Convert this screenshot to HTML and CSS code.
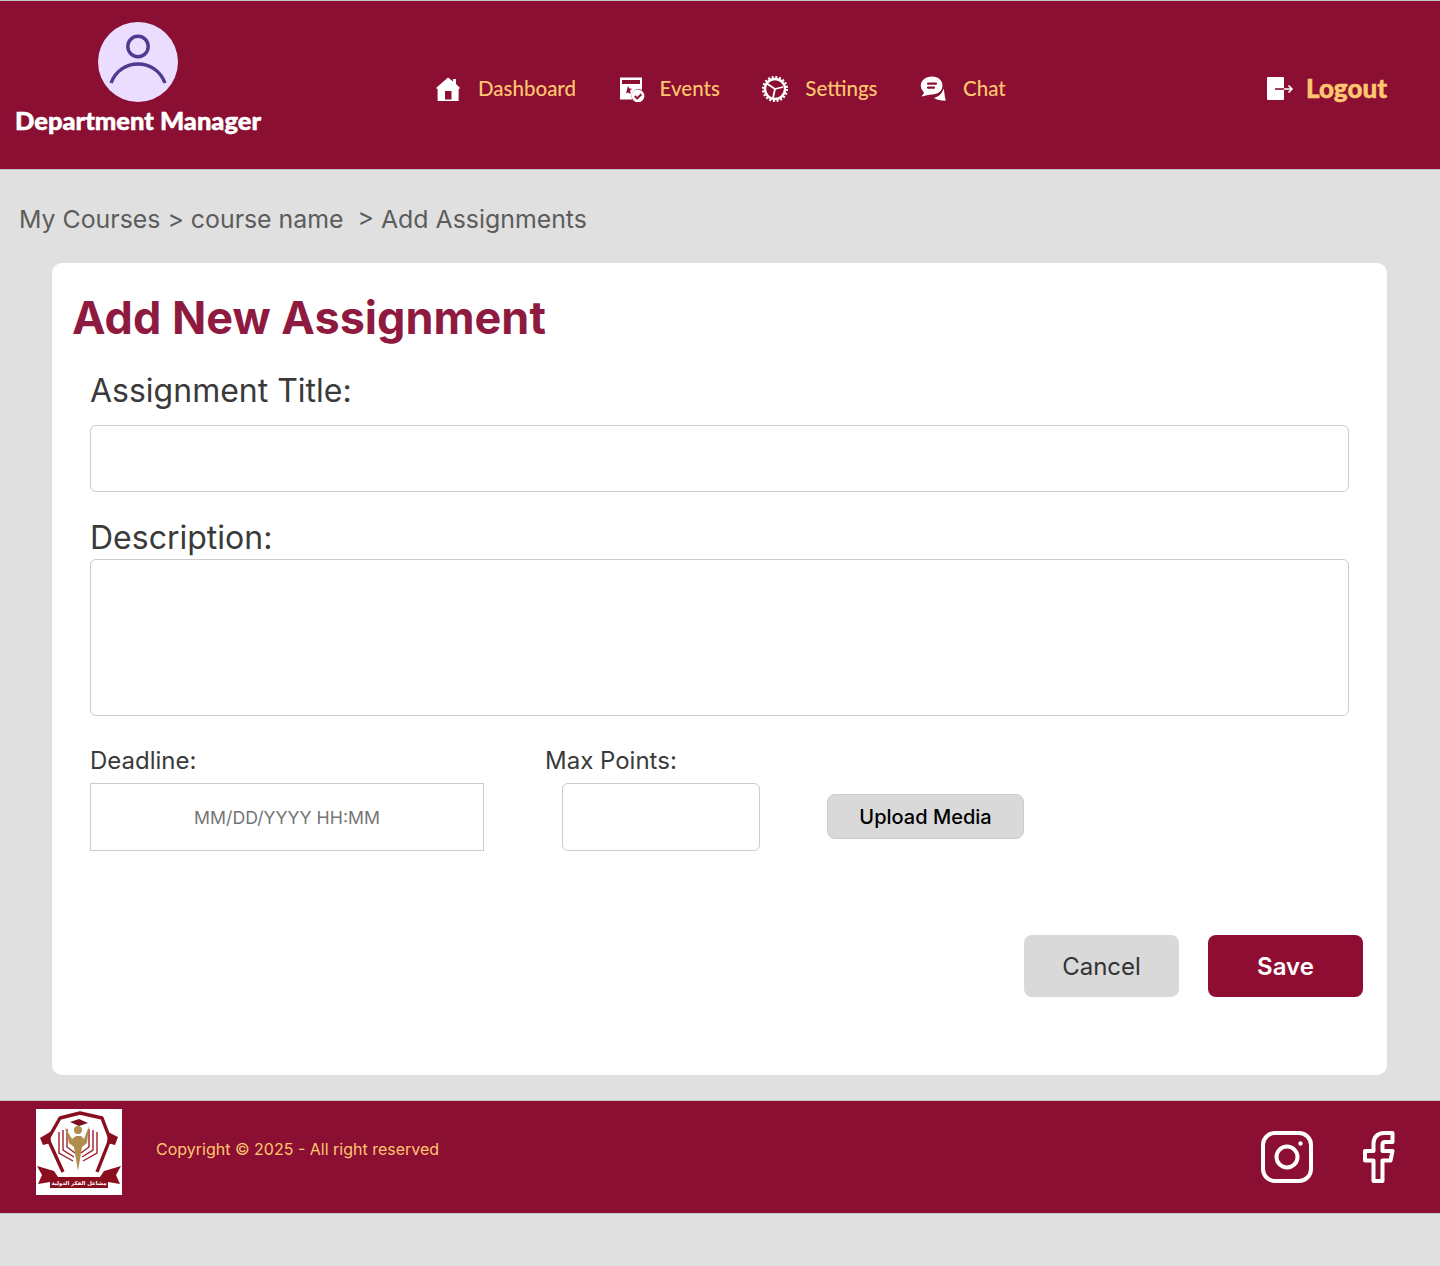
FILE: index.html
```html
<!DOCTYPE html>
<html lang="en">
<head>
  <meta charset="UTF-8">
  <meta name="viewport" content="width=device-width, initial-scale=1.0">
  <title>Add New Assignment</title>
  <link rel="stylesheet" href="styles.css">
</head>
<body>
  <header class="top-bar">
    <div class="brand">
      <div class="avatar">
        <svg width="80" height="80" viewBox="0 0 80 80" fill="none" stroke="#4f3a8f" stroke-width="3.4">
          <circle cx="40" cy="24.5" r="10.2"/>
          <path d="M13 61 C18 48 29 42 40 42 C51 42 62 48 67 61"/>
        </svg>
      </div>
      <div class="brand-name">Department Manager</div>
    </div>

    <nav class="main-nav">
      <a class="nav-item" href="#">
        <svg class="nav-icon" viewBox="0 0 26 26" fill="#fff">
          <path d="M13 1.5 L18 5.5 V3 H21 V8 L25 12 L23.6 13.2 V25 H2.6 V13.2 L1 12 Z"/>
          <rect x="10" y="15" width="6.5" height="8.5" fill="#8a0f32"/>
        </svg>
        <span>Dashboard</span>
      </a>
      <a class="nav-item events" href="#">
        <svg class="nav-icon" viewBox="0 0 26 26">
          <path d="M1 1.5 H23 V14 A7 7 0 0 0 13.5 23.5 H1 Z" fill="#fff"/>
          <rect x="3" y="4" width="18" height="4" fill="#8a0f32"/>
          <path d="M9 10 L10.4 12.6 L13 12.8 L11 14.8 L11.8 18 L9 16.4 L7 17.6 Z" fill="#8a0f32"/>
          <circle cx="19" cy="20" r="6.4" fill="#fff"/>
          <path d="M15.8 20 L18.2 22.4 L22.4 18.2" fill="none" stroke="#8a0f32" stroke-width="2"/>
        </svg>
        <span>Events</span>
      </a>
      <a class="nav-item" href="#">
        <svg class="nav-icon" viewBox="0 0 26 26" fill="none" stroke="#fff">
          <circle cx="13" cy="13" r="10" stroke-width="2.4"/>
          <circle cx="13" cy="13" r="12" stroke-width="2.2" stroke-dasharray="2 1.77"/>
          <path d="M13 13 L5.5 8 M13 13 L21 11 M13 13 L11 22" stroke-width="1.8"/>
        </svg>
        <span>Settings</span>
      </a>
      <a class="nav-item" href="#">
        <svg class="nav-icon" viewBox="0 0 26 26">
          <path d="M12 .5 C18.5 .5 22.5 4.6 22.5 9.6 C22.5 15 18 18.4 12 18.4 C9 18.4 5 20 1.4 20.4 C3 19 4 17.6 3.8 16 C1.8 14.4 .8 12 .8 9.6 C.8 4.6 5.5 .5 12 .5 Z" fill="#fff"/>
          <rect x="7" y="6.5" width="10" height="2.2" rx="1" fill="#8a0f32"/>
          <rect x="7" y="10.5" width="8" height="2.2" rx="1" fill="#8a0f32"/>
          <path d="M23.6 12.5 C24.6 16 24.4 20 25.8 24.6 C22 24.8 17 24 14 22 C18 21 22 18 23.6 12.5 Z" fill="#fff"/>
        </svg>
        <span>Chat</span>
      </a>
    </nav>

    <a class="logout" href="#">
      <svg width="29" height="25" viewBox="0 0 29 25">
        <rect x="1" y="1" width="17" height="23" rx="1" fill="#fff"/>
        <path d="M9 13 H18" stroke="#8a0f32" stroke-width="1.6"/>
        <path d="M18 13 H26 M22.5 9.5 L26 13 L22.5 16.5" fill="none" stroke="#fff" stroke-width="1.6"/>
      </svg>
      <span>Logout</span>
    </a>
  </header>

  <div class="breadcrumb">My Courses &gt; course name &nbsp;&gt; Add Assignments</div>

  <main class="card">
    <h1>Add New Assignment</h1>
    <form class="assignment-form">
      <label class="big-label" for="title">Assignment Title:</label>
      <input class="field title-field" type="text" id="title">

      <label class="big-label desc-label" for="description">Description:</label>
      <textarea class="field desc-field" id="description"></textarea>

      <div class="meta-row">
        <div class="deadline">
          <label for="deadline">Deadline:</label>
          <input class="field square" type="text" id="deadline" placeholder="MM/DD/YYYY HH:MM">
        </div>
        <div class="points">
          <label for="points">Max Points:</label>
          <input class="field" type="text" id="points">
        </div>
        <button class="upload-btn" type="button">Upload Media</button>
      </div>

      <div class="form-actions">
        <button class="btn btn-cancel" type="button">Cancel</button>
        <button class="btn btn-save" type="submit">Save</button>
      </div>
    </form>
  </main>

  <footer class="bottom-bar">
    <div class="school-logo">
      <svg width="86" height="86" viewBox="0 0 86 86">
        <rect width="86" height="86" fill="#fff"/>
        <path d="M27 63 L12 30 L24 9 L44 4 L66 9 L74 30 L61 63" fill="none" stroke="#8a0f1e" stroke-width="3.4" stroke-linejoin="round"/>
        <path d="M14 23 L4 29 L7 36 L15 34 Z M72 23 L82 28 L79 36 L71 34 Z" fill="#8a0f1e"/>
        <path d="M23 23 V44 L37 52 M27 21 V41 L38 48 M31 20 V38 L39 44" fill="none" stroke="#a02030" stroke-width="1.4"/>
        <path d="M61 23 V44 L47 52 M57 21 V41 L46 48 M53 20 V38 L45 44" fill="none" stroke="#a02030" stroke-width="1.4"/>
        <path d="M29 18 L36 30 L40 27 H45 L48 30 L53 17 L51 34 L46 38 L42 62 L38 38 L33 34 Z" fill="#b08d4c"/>
        <circle cx="42" cy="21" r="4" fill="#b08d4c"/>
        <path d="M34 13 L43 10 L52 14 L43 17 Z" fill="#7a1020"/>
        <path d="M1 57 L18 62 L22 68 H64 L68 62 L85 57 L80 66 L84 75 L72 73 L72 79 H14 L14 73 L2 75 L6 66 Z" fill="#8a0f1e"/>
        <text class="logo-text" x="43" y="76" text-anchor="middle">مشاعل الفكر الدولية</text>
      </svg>
    </div>
    <p class="copyright">Copyright © 2025 - All right reserved</p>
    <div class="socials">
      <svg width="52" height="52" viewBox="0 0 52 52" fill="none" stroke="#fff" stroke-width="4">
        <rect x="2" y="2" width="48" height="48" rx="12"/>
        <circle cx="26" cy="26" r="10.5"/>
        <circle cx="39.5" cy="12.5" r="1.6" fill="#fff" stroke-width="1.2"/>
      </svg>
      <svg width="32" height="52" viewBox="0 0 32 52" fill="none" stroke="#fff" stroke-width="4" stroke-linejoin="round">
        <path d="M29.5 2 H21 C14.5 2 10.5 6.5 10.5 12.5 V20 H2 V29.5 H10.5 V50 H19.5 V29.5 H27.5 L29.5 20 H19.5 V13.5 C19.5 12 20.5 11 22 11 H29.5 Z"/>
      </svg>
    </div>
  </footer>
</body>
</html>
```

FILE: styles.css
```css
* {
  box-sizing: border-box;
}
body {
  font-family: Inter, "Liberation Sans", sans-serif;
  background: #e0e0e0;
  color: #3a3a3a;
  margin: 0;
  min-height: 1266px;
}
a {
  text-decoration: none;
}

/* header */
.top-bar {
  height: 170px;
  background: #8a0f32;
  border-top: 1px solid #c8c8c8;
  border-bottom: 1px solid #c8c8c8;
  display: flex;
  font-family: Lato, sans-serif;
}
.brand {
  width: 246px;
  margin: 21px 0 0 15px;
  display: flex;
  flex-direction: column;
  align-items: center;
}
.avatar {
  width: 80px;
  height: 80px;
  border-radius: 50%;
  background: #eaddff;
}
.avatar svg {
  display: block;
}
.brand-name {
  color: #fff;
  font-size: 25.5px;
  font-weight: 900;
  line-height: 30px;
  margin-top: 3px;
  white-space: nowrap;
  -webkit-text-stroke: 0.5px #fff;
}
.main-nav {
  display: flex;
  gap: 42.5px;
  margin: 72px 0 0 174px;
  height: 30px;
}
.nav-item {
  display: flex;
  align-items: center;
  gap: 17px;
  color: #ffc670;
  font-size: 20.5px;
  font-weight: 500;
}
.nav-item.events {
  gap: 15px;
}
.nav-icon {
  width: 26px;
  height: 26px;
  margin-top: 2px;
}
.logout {
  margin: 72px 0 0 auto;
  padding-right: 53px;
  height: 30px;
  display: flex;
  align-items: center;
  gap: 11px;
  color: #ffc670;
  font-size: 26px;
  font-weight: 900;
  -webkit-text-stroke: 0.5px #ffc670;
}

.breadcrumb {
  padding: 34px 0 0 19px;
  height: 93px;
  font-size: 24.87px;
  line-height: 30px;
  color: #5c5c5c;
}

/* form card */
.card {
  width: 1335px;
  height: 812px;
  margin: 0 0 25px 52px;
  padding: 27px 24px 0 20px;
  background: #fff;
  border-radius: 10px;
}
h1 {
  margin: 0;
  color: #8f1a40;
  font-size: 45px;
  font-weight: 700;
  line-height: 56px;
}
.assignment-form {
  padding-left: 18px;
}
.assignment-form label {
  display: block;
}
.big-label {
  font-size: 32px;
  line-height: 40px;
  margin-top: 25px;
}
.desc-label {
  margin-top: 26px;
}
.field {
  display: block;
  width: 100%;
  border: 1px solid #ccc;
  border-radius: 6px;
  background: #fff;
  font-family: inherit;
  resize: none;
}
.title-field {
  height: 67px;
  width: 1259px;
  margin-top: 14px;
}
.desc-field {
  height: 157px;
  width: 1259px;
  margin-top: 1px;
}
.meta-row {
  display: flex;
  align-items: flex-end;
  margin-top: 29px;
}
.meta-row label {
  font-size: 24px;
  line-height: 32px;
  margin-bottom: 6px;
}
.deadline {
  width: 394px;
}
.square {
  height: 68px;
  border-radius: 0;
  text-align: center;
  font-size: 17.7px;
}
.square::placeholder {
  color: #757575;
}
.points {
  width: 214px;
  margin-left: 61px;
}
.points label {
  white-space: nowrap;
}
.points .field {
  height: 68px;
  width: 198px;
  margin-left: 17px;
}
.upload-btn {
  width: 197px;
  height: 45px;
  margin: 0 0 12px 68px;
  border: 1px solid #ccc;
  border-radius: 8px;
  background: #d9d9d9;
  color: #000;
  font-family: inherit;
  font-size: 20px;
  font-weight: 500;
}
.form-actions {
  display: flex;
  justify-content: flex-end;
  gap: 29px;
  margin-top: 84px;
  width: 1273px;
}
.btn {
  width: 155px;
  height: 62px;
  border: none;
  border-radius: 8px;
  font-family: inherit;
  font-size: 24px;
}
.btn-cancel {
  background: #d9d9d9;
  color: #333;
}
.btn-save {
  background: #8f0d32;
  color: #fff;
  font-weight: 600;
}

/* footer */
.bottom-bar {
  height: 114px;
  background: #8a0f32;
  border-top: 1px solid #c8c8c8;
  border-bottom: 1px solid #c8c8c8;
  display: flex;
  align-items: flex-start;
}
.school-logo {
  margin: 8px 0 0 36px;
  height: 86px;
}
.school-logo svg {
  display: block;
}
.logo-text {
  font-family: "DejaVu Sans", sans-serif;
  font-size: 5.4px;
  font-weight: 700;
  fill: #fff;
}
.copyright {
  margin: 38px 0 0 34px;
  color: #ffc670;
  font-size: 16px;
  line-height: 20px;
}
.socials {
  margin: 30px 45px 0 auto;
  display: flex;
  gap: 50px;
}
```
